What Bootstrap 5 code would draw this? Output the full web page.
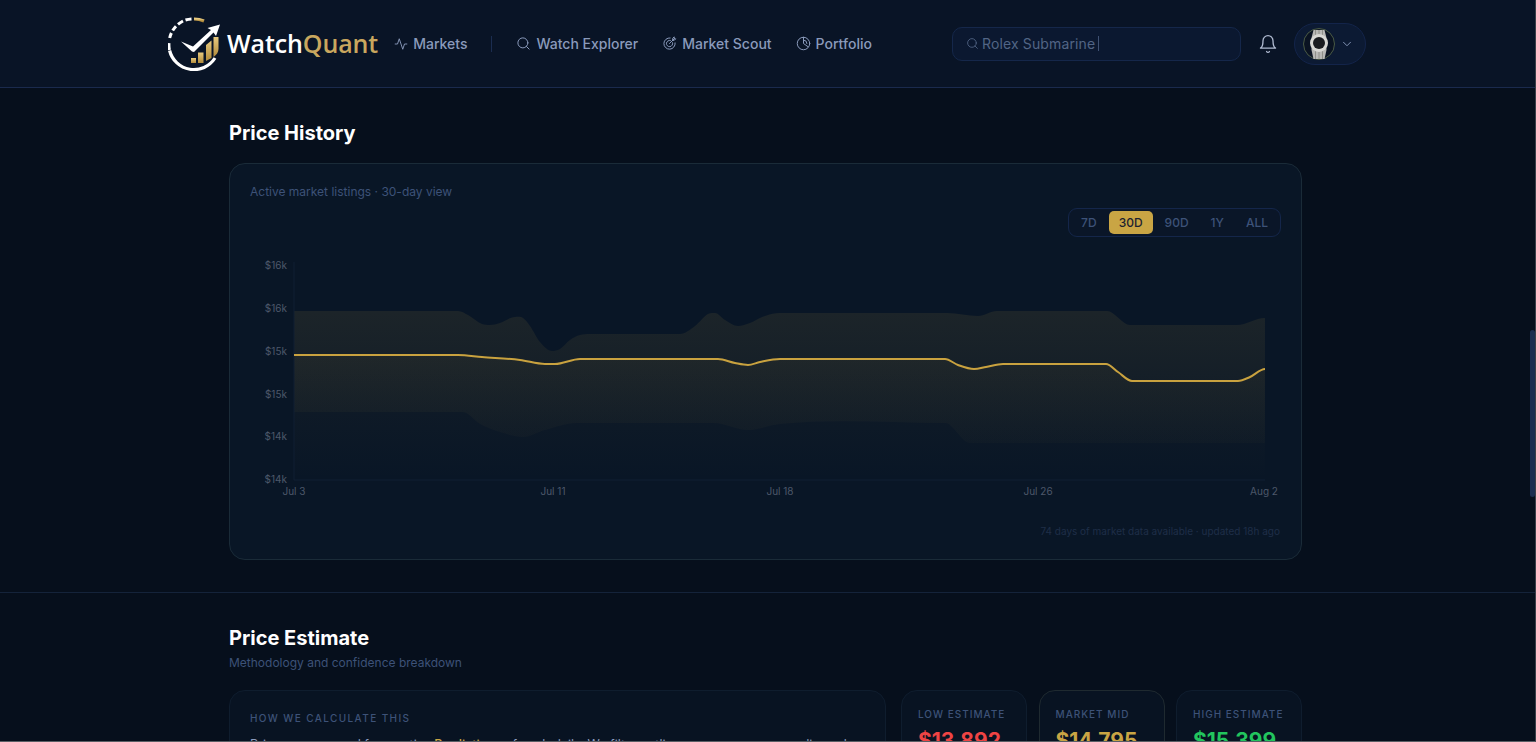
<!DOCTYPE html>
<html lang="en">

<head>
    <meta charset="UTF-8">
    <meta name="viewport" content="width=device-width, initial-scale=1.0">
    <title>WatchQuant - Price History</title>
    <link href="https://cdn.jsdelivr.net/npm/bootstrap@5.3.3/dist/css/bootstrap.min.css" rel="stylesheet">
    <style>
        html, body {
            height: 100%;
            overflow: hidden;
        }

        body {
            background: #060f1c;
            font-family: Inter, "Liberation Sans", sans-serif;
            color: #fff;
        }

        /* top bar */
        .wq-nav {
            height: 88px;
            padding: 0 2px 0 0;
            background: #091426;
            border-bottom: 1px solid #1a2a4d;
        }

        .wq-nav-inner {
            width: 1198px;
            gap: 24px;
        }

        .wq-brand {
            margin-right: -8px;
            gap: 6px;
            font-family: "Open Sans", sans-serif;
            font-size: 25px;
            font-weight: 600;
            letter-spacing: -.1px;
            color: #fff;
            text-decoration: none;
        }

        .wq-brand span {
            color: #c9a75e;
        }

        .wq-link {
            gap: 5px;
            font-size: 14px;
            font-weight: 500;
            color: #8a9abb;
            text-decoration: none;
        }

        .wq-link svg, .wq-search svg, .wq-bell svg, .wq-pill .chev {
            fill: none;
            stroke: currentColor;
            stroke-width: 1.6;
            stroke-linecap: round;
            stroke-linejoin: round;
        }

        .wq-divider {
            width: 1px;
            height: 16px;
            background: #1b2d50;
        }

        .wq-search {
            width: 289px;
            height: 34px;
            padding: 0 13px;
            gap: 3px;
            background: #0b1830;
            border: 1px solid #15274a;
            border-radius: 10px;
            font-size: 14px;
            letter-spacing: .13px;
            color: #526585;
        }

        .wq-caret {
            width: 1px;
            height: 15px;
            background: #3f5173;
        }

        .wq-bell {
            color: #aeb9cf;
            margin: 0 -8px 0 -7px;
        }

        .wq-pill {
            width: 72px;
            height: 42px;
            padding: 0 8px;
            gap: 5px;
            background: #0c1a33;
            border: 1px solid #13244a;
            border-radius: 21px;
            color: #8a9abb;
        }

        /* page sections */
        .wq-section {
            padding: 33px 0 32px;
        }

        .wq-section + .wq-section {
            padding-top: 33px;
            border-top: 1px solid #14233a;
        }

        .wq-wrap {
            width: 1073px;
            margin-left: 229px;
        }

        .wq-title {
            font-size: 20px;
            line-height: 24px;
            font-weight: 700;
            margin: 0 0 18px;
        }

        .wq-sub {
            font-size: 12px;
            line-height: 18px;
            color: #3d5278;
            margin: -14px 0 18px;
        }

        .wq-card {
            background: #091626;
            border: 1px solid #1a2b38;
            border-radius: 16px;
        }

        .wq-chart-card {
            padding: 19px 20px 20px;
        }

        .wq-card-note {
            font-size: 12px;
            line-height: 18px;
            color: #3d5278;
            margin: 0 0 7px;
        }

        .wq-range {
            padding: 2px;
            gap: 2px;
            height: 29px;
            border: 1px solid #14264a;
            border-radius: 9px;
            background: #0a1628;
        }

        .wq-range .btn {
            --bs-btn-padding-x: 10px;
            --bs-btn-padding-y: 0;
            --bs-btn-font-size: 12px;
            --bs-btn-font-weight: 500;
            --bs-btn-color: #3d5278;
            --bs-btn-border-width: 0;
            --bs-btn-border-radius: 5px;
            --bs-btn-hover-color: #3d5278;
            height: 23px;
            line-height: 23px;
        }

        .wq-range .btn.active {
            --bs-btn-active-bg: #c9a544;
            --bs-btn-active-color: #1c2230;
            width: 44px;
            padding: 0;
        }

        .wq-chart {
            display: block;
            margin-top: 13px;
            width: 1031px;
            height: 250px;
        }

        .wq-chart text {
            font-family: Inter, "Liberation Sans", sans-serif;
            font-size: 10px;
            fill: #4d586a;
        }

        .wq-chart-foot {
            font-size: 10px;
            line-height: 16px;
            color: #1f2e48;
            text-align: right;
            margin: 23px 1px 0 0;
        }

        /* estimate row */
        .wq-est-row {
            gap: 11.5px;
        }

        .wq-method {
            width: 657px;
            margin-right: 3.5px;
            padding: 20px;
            background: #081322;
            border-color: #0f1d2e;
        }

        .wq-label {
            font-size: 10px;
            line-height: 14px;
            font-weight: 500;
            letter-spacing: 1.4px;
            text-transform: uppercase;
            color: #3d5278;
            margin: 0 0 9px;
        }

        .wq-method p:last-child {
            font-size: 12.5px;
            line-height: 22px;
            color: #8a9abb;
            margin: 0;
        }

        .wq-method b {
            color: #c9a544;
            font-weight: 500;
        }

        .wq-stat {
            width: 126px;
            padding: 16px;
            background: #081322;
            border-color: #0f1d2e;
        }

        .wq-stat.mid {
            border-color: #1f2a30;
        }

        .wq-stat .wq-label {
            white-space: nowrap;
            letter-spacing: 1px;
            margin-bottom: 6px;
        }

        .wq-value {
            font-size: 21px;
            line-height: 28px;
            font-weight: 700;
        }

        .wq-thumb {
            position: fixed;
            top: 330px;
            right: 1px;
            width: 5px;
            height: 167px;
            border-radius: 3px;
            background: #1c2e50;
        }

        .wq-frame {
            position: fixed;
            inset: 0;
            border-right: 1px solid #3a4048;
            border-bottom: 1px solid #5a5f66;
            pointer-events: none;
        }
    </style>
</head>

<body>
    <nav class="navbar wq-nav">
        <div class="wq-nav-inner d-flex align-items-center mx-auto">
            <a class="wq-brand d-flex align-items-center" href="#">
                <svg width="53" height="54" viewBox="168 17 53 54">
                    <defs>
                        <linearGradient id="wqGold" x1="0" y1="0" x2="0" y2="1">
                            <stop offset="0" stop-color="#e8ca7e"></stop>
                            <stop offset="1" stop-color="#b08a3a"></stop>
                        </linearGradient>
                    </defs>
                    <g fill="none" stroke="#fff" stroke-width="3">
                        <path d="M169.700 38 A25 25 0 0 1 171.400 33"></path>
                        <path d="M172.700 30.500 A25 25 0 0 1 176 26.200"></path>
                        <path d="M178 24.400 A25 25 0 0 1 183 21"></path>
                        <path d="M185.500 20 A25 25 0 0 1 191.500 18.900"></path>
                        <path d="M169 43 A25 25 0 0 0 169.400 50"></path>
                        <path d="M169.600 50.500 A25 25 0 0 0 215 58" stroke-width="3.200"></path>
                    </g>
                    <path d="M194 19 A25 25 0 0 1 204 21" fill="none" stroke="url(#wqGold)" stroke-width="3"></path>
                    <path d="M181 41.500 L193 46.500 L211 30 L207.500 28 L220 24.500 L216 36 L213.500 32.500 L194 52 L192 51.500 Z" fill="#fff"></path>
                    <g fill="url(#wqGold)">
                        <path d="M191 58h5v5h-5z"></path>
                        <path d="M198 52.500h5.500v10.500H198z"></path>
                        <path d="M206 45l5.500-4.500V58l-5.500 3z"></path>
                        <path d="M213.500 37h5v12c0 3-2 6-5 8z"></path>
                    </g>
                </svg>
                <div>Watch<span>Quant</span></div>
            </a>
            <a class="wq-link d-flex align-items-center" href="#">
                <svg width="14" height="14" viewBox="0 0 24 24"><path d="M22 12h-4l-3 9L9 3l-3 9H2"></path></svg>
                Markets
            </a>
            <div class="wq-divider"></div>
            <a class="wq-link d-flex align-items-center" href="#">
                <svg width="15" height="15" viewBox="0 0 24 24"><circle cx="11" cy="11" r="8"></circle><path d="m21 21-4.300-4.300"></path></svg>
                Watch Explorer
            </a>
            <a class="wq-link d-flex align-items-center" href="#">
                <svg width="15" height="15" viewBox="0 0 24 24"><path d="M13 3.100A9 9 0 1 0 21 11"></path><path d="M13.500 7.200A5 5 0 1 0 17 10.800"></path><path d="M12 12 20 4"></path><path d="M17 4.500V7h2.500L22 4.500h-2.500V2z"></path></svg>
                Market Scout
            </a>
            <a class="wq-link d-flex align-items-center" href="#">
                <svg width="15" height="15" viewBox="0 0 24 24"><circle cx="12" cy="12" r="10"></circle><path d="M12 2v10l7 5"></path><path d="M12 6.500A5.500 5.500 0 0 1 17.500 12"></path></svg>
                Portfolio
            </a>
            <div class="d-flex align-items-center ms-auto" style="gap:24px">
                <div class="wq-search d-flex align-items-center">
                    <svg width="13" height="13" viewBox="0 0 24 24" class="flex-shrink-0"><circle cx="11" cy="11" r="8"></circle><path d="m21 21-4.300-4.300"></path></svg>
                    <span>Rolex Submarine</span>
                    <span class="wq-caret"></span>
                </div>
                <div class="wq-bell d-flex">
                    <svg width="20" height="20" viewBox="0 0 24 24"><path d="M6 8a6 6 0 0 1 12 0c0 7 3 9 3 9H3s3-2 3-9"></path><path d="M10.300 21a1.900 1.900 0 0 0 3.400 0"></path></svg>
                </div>
                <div class="wq-pill d-flex align-items-center">
                    <svg width="32" height="32" viewBox="0 0 32 32" class="flex-shrink-0">
                        <circle cx="16" cy="16" r="15.500" fill="#0a1322" stroke="#4a5a45"></circle>
                        <path d="M10.500 2h11l2 8v12l-2 9h-11l-2-9V10z" fill="#b9b9b6"></path>
                        <path d="M12.500 2v29M16 2v29M19.500 2v29" stroke="#85857f" stroke-width=".8"></path>
                        <circle cx="16" cy="15" r="9" fill="#d8d8d4"></circle>
                        <circle cx="16" cy="15" r="6" fill="#1a1c20"></circle>
                    </svg>
                    <svg class="chev" width="14" height="14" viewBox="0 0 24 24"><path d="m6 9 6 6 6-6"></path></svg>
                </div>
            </div>
        </div>
    </nav>

    <main>
        <section class="wq-section">
            <div class="wq-wrap">
                <h2 class="wq-title">Price History</h2>
                <div class="wq-card wq-chart-card">
                    <p class="wq-card-note">Active market listings · 30-day view</p>
                    <div class="d-flex justify-content-end">
                        <div class="wq-range d-flex" role="group">
                            <button class="btn" type="button">7D</button>
                            <button class="btn active" type="button">30D</button>
                            <button class="btn" type="button">90D</button>
                            <button class="btn" type="button">1Y</button>
                            <button class="btn" type="button">ALL</button>
                        </div>
                    </div>
                    <svg class="wq-chart" viewBox="250 250 1031 250">
                        <defs>
                            <linearGradient id="underLine" gradientUnits="userSpaceOnUse" x1="0" y1="355" x2="0" y2="480">
                                <stop offset="0" stop-color="#c9a544" stop-opacity=".05"></stop>
                                <stop offset="1" stop-color="#c9a544" stop-opacity="0"></stop>
                            </linearGradient>
                            <linearGradient id="bandFill" gradientUnits="userSpaceOnUse" x1="0" y1="311" x2="0" y2="445">
                                <stop offset="0" stop-color="#c9a544" stop-opacity=".1"></stop>
                                <stop offset="1" stop-color="#c9a544" stop-opacity=".02"></stop>
                            </linearGradient>
                        </defs>
                        <path id="bandPath" fill="url(#bandFill)"></path>
                        <path id="areaPath" fill="url(#underLine)"></path>
                        <path d="M294 262V480H1265" fill="none" stroke="#101e33"></path>
                        <path id="linePath" fill="none" stroke="#c9a23f" stroke-width="2" stroke-linejoin="round"></path>
                        <g text-anchor="end">
                            <text x="287" y="269">$16k</text>
                            <text x="287" y="312">$16k</text>
                            <text x="287" y="355">$15k</text>
                            <text x="287" y="398">$15k</text>
                            <text x="287" y="440">$14k</text>
                            <text x="287" y="483">$14k</text>
                        </g>
                        <g text-anchor="middle">
                            <text x="294" y="495">Jul 3</text>
                            <text x="553" y="495">Jul 11</text>
                            <text x="780" y="495">Jul 18</text>
                            <text x="1038" y="495">Jul 26</text>
                            <text x="1264" y="495">Aug 2</text>
                        </g>
                    </svg>
                    <p class="wq-chart-foot">74 days of market data available · updated 18h ago</p>
                </div>
            </div>
        </section>

        <section class="wq-section">
            <div class="wq-wrap">
                <h2 class="wq-title">Price Estimate</h2>
                <p class="wq-sub">Methodology and confidence breakdown</p>
                <div class="wq-est-row d-flex align-items-start">
                    <div class="wq-card wq-method">
                        <p class="wq-label">How we calculate this</p>
                        <p>Prices are sourced from active <b>Predictions</b> of each daily. We filter outliers, compare every median ask and weight recent listings.</p>
                    </div>
                    <div class="wq-card wq-stat">
                        <p class="wq-label">Low estimate</p>
                        <div class="wq-value" style="color:#ef4444">$13,892</div>
                    </div>
                    <div class="wq-card wq-stat mid">
                        <p class="wq-label">Market mid</p>
                        <div class="wq-value" style="color:#c9a544">$14,795</div>
                    </div>
                    <div class="wq-card wq-stat">
                        <p class="wq-label">High estimate</p>
                        <div class="wq-value" style="color:#22c55e">$15,399</div>
                    </div>
                </div>
            </div>
        </section>
    </main>

    <div class="wq-thumb"></div>
    <div class="wq-frame"></div>

    <script>
        const linea = [[294,355],[458,355],[482,357],[520,360],[545,364],[555,364],[580,359],[718,359],[735,363],[748,365],[760,362],[780,359],[945,359],[958,365],[974,369],[986,367],[1003,364],[1106,364],[1118,372],[1132,381],[1238,381],[1250,377],[1265,369]];
        const bandaAlta = [[294,311],[458,311],[468,315],[482,324],[490,325],[500,323],[515,317],[523,318],[530,326],[540,342],[552,351],[560,349],[570,340],[580,335],[590,334],[680,334],[695,326],[708,314],[715,313],[725,320],[738,326],[750,323],[765,316],[780,313],[947,313],[978,316],[997,311],[1107,311],[1130,325],[1237,325],[1265,318]];
        const bandaBaja = [[294,412],[463,412],[480,424],[500,432],[523,437],[545,430],[577,423],[713,423],[748,430],[780,424],[945,423],[970,443],[1265,443]];

        // monotone curve through the points, flat at turning points
        function curva(puntos, mover) {
            const pendientes = puntos.map((p, i) => {
                if (i === 0 || i === puntos.length - 1) return 0;
                const a = (p[1] - puntos[i - 1][1]) / (p[0] - puntos[i - 1][0]);
                const b = (puntos[i + 1][1] - p[1]) / (puntos[i + 1][0] - p[0]);
                return a * b <= 0 ? 0 : (a + b) / 2;
            });
            let d = (mover ? "M" : "L") + puntos[0].join(" ");
            for (let i = 1; i < puntos.length; i++) {
                const [x0, y0] = puntos[i - 1];
                const [x1, y1] = puntos[i];
                const t = (x1 - x0) / 3;
                d += `C${x0 + t} ${y0 + pendientes[i - 1] * t} ${x1 - t} ${y1 - pendientes[i] * t} ${x1} ${y1}`;
            }
            return d;
        }

        document.getElementById("linePath").setAttribute("d", curva(linea, true));
        document.getElementById("areaPath").setAttribute("d", curva(linea, true) + "V480H294Z");
        document.getElementById("bandPath").setAttribute("d", curva(bandaAlta, true) + curva(bandaBaja.slice().reverse(), false) + "Z");
    </script>
    <script src="https://cdn.jsdelivr.net/npm/bootstrap@5.3.3/dist/js/bootstrap.bundle.min.js"></script>
</body>

</html>
